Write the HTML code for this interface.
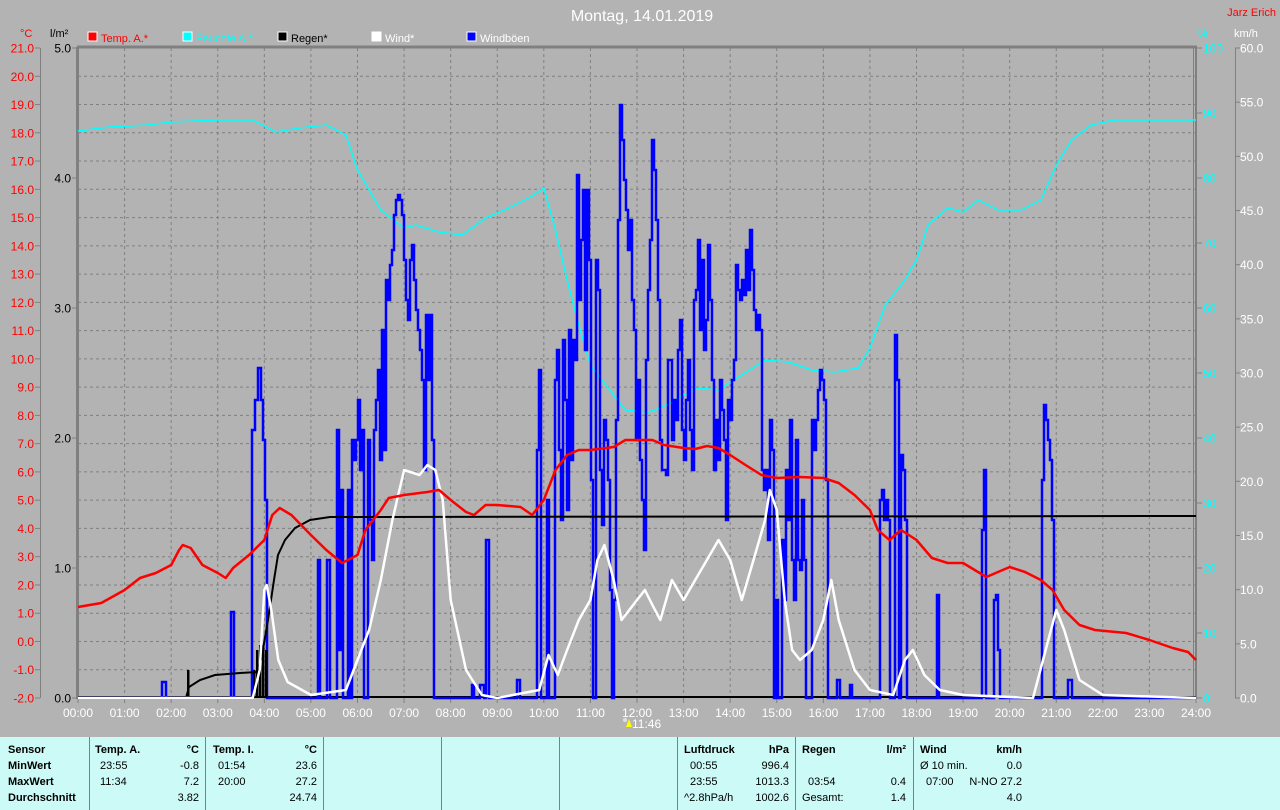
<!DOCTYPE html>
<html><head><meta charset="utf-8"><style>
body{margin:0;width:1280px;height:810px;background:#b3b3b3;overflow:hidden;font-family:"Liberation Sans",sans-serif}
svg{position:absolute;left:0;top:0}
#tbl{position:absolute;left:0;top:737px;width:1280px;height:73px;background:#ccfaf6;font-size:11px;color:#000}
#tbl div{position:absolute;white-space:nowrap}
.b{font-weight:bold}
.sep{top:0;width:1px;height:73px;background:#808080}
.r{text-align:right}
</style></head><body>
<svg id="s" width="1280" height="737" xmlns="http://www.w3.org/2000/svg" font-family="Liberation Sans, sans-serif"></svg>
<div id="tbl">
<div class="sep" style="left:89px"></div><div class="sep" style="left:205px"></div><div class="sep" style="left:323px"></div><div class="sep" style="left:441px"></div><div class="sep" style="left:559px"></div><div class="sep" style="left:677px"></div><div class="sep" style="left:795px"></div><div class="sep" style="left:913px"></div>
<div class="b" style="left:8px;top:7px">Sensor</div><div class="b" style="left:8px;top:23px">MinWert</div><div class="b" style="left:8px;top:39px">MaxWert</div><div class="b" style="left:8px;top:55px">Durchschnitt</div>
<div class="b" style="left:95px;top:7px">Temp. A.</div><div class="b r" style="right:1081px;top:7px">°C</div>
<div style="left:100px;top:23px">23:55</div><div class="r" style="right:1081px;top:23px">-0.8</div>
<div style="left:100px;top:39px">11:34</div><div class="r" style="right:1081px;top:39px">7.2</div>
<div class="r" style="right:1081px;top:55px">3.82</div>
<div class="b" style="left:213px;top:7px">Temp. I.</div><div class="b r" style="right:963px;top:7px">°C</div>
<div style="left:218px;top:23px">01:54</div><div class="r" style="right:963px;top:23px">23.6</div>
<div style="left:218px;top:39px">20:00</div><div class="r" style="right:963px;top:39px">27.2</div>
<div class="r" style="right:963px;top:55px">24.74</div>
<div class="b" style="left:684px;top:7px">Luftdruck</div><div class="b r" style="right:491px;top:7px">hPa</div>
<div style="left:690px;top:23px">00:55</div><div class="r" style="right:491px;top:23px">996.4</div>
<div style="left:690px;top:39px">23:55</div><div class="r" style="right:491px;top:39px">1013.3</div>
<div style="left:684px;top:55px">^2.8hPa/h</div><div class="r" style="right:491px;top:55px">1002.6</div>
<div class="b" style="left:802px;top:7px">Regen</div><div class="b r" style="right:374px;top:7px">l/m²</div>
<div style="left:808px;top:39px">03:54</div><div class="r" style="right:374px;top:39px">0.4</div>
<div style="left:802px;top:55px">Gesamt:</div><div class="r" style="right:374px;top:55px">1.4</div>
<div class="b" style="left:920px;top:7px">Wind</div><div class="b r" style="right:258px;top:7px">km/h</div>
<div style="left:920px;top:23px">Ø 10 min.</div><div class="r" style="right:258px;top:23px">0.0</div>
<div style="left:926px;top:39px">07:00</div><div class="r" style="right:258px;top:39px">N-NO 27.2</div>
<div class="r" style="right:258px;top:55px">4.0</div>
</div>
<script>
var s=document.getElementById('s'),o='';
var X0=78,X1=1196,Y0=48,Y1=698,HW=(X1-X0)/24;
function hx(h){return X0+h*HW}
for(var i=1;i<24;i++){var x=hx(i);o+='<line x1="'+x+'" y1="'+Y0+'" x2="'+x+'" y2="'+Y1+'" stroke="#808080" stroke-dasharray="3,3"/>';}
for(var i=1;i<23;i++){var y=Y0+i*650/23;o+='<line x1="'+X0+'" y1="'+y+'" x2="'+X1+'" y2="'+y+'" stroke="#808080" stroke-dasharray="3,3"/>';}
o+='<line x1="77" y1="47" x2="1197" y2="47" stroke="#808080" stroke-width="3"/>';
o+='<line x1="77.5" y1="47" x2="77.5" y2="699" stroke="#808080" stroke-width="3"/>';
o+='<line x1="1193.5" y1="47" x2="1193.5" y2="699" stroke="#808080" stroke-width="1"/>';
o+='<line x1="1196" y1="47" x2="1196" y2="699" stroke="#808080" stroke-width="2"/>';
o+='<line x1="78" y1="697" x2="1196" y2="697" stroke="#000" stroke-width="2"/>';
o+='<line x1="40.5" y1="48" x2="40.5" y2="698" stroke="#808080"/>';
for(var i=0;i<=23;i++){var y=Y0+i*650/23,v=(21-i).toFixed(1);o+='<line x1="35" y1="'+y+'" x2="40" y2="'+y+'" stroke="#808080"/><text x="34" y="'+(y+4.5)+'" fill="#f00" font-size="12" text-anchor="end">'+v+'</text>';}
for(var i=0;i<=5;i++){var y=Y0+i*130;o+='<line x1="72" y1="'+y+'" x2="77" y2="'+y+'" stroke="#808080"/><text x="71" y="'+(y+4.5)+'" fill="#000" font-size="12" text-anchor="end">'+(5-i).toFixed(1)+'</text>';}
for(var i=0;i<=10;i++){var y=Y0+i*65;o+='<line x1="1197" y1="'+y+'" x2="1202" y2="'+y+'" stroke="#808080"/><text x="1203" y="'+(y+4.5)+'" fill="#0ff" font-size="12">'+(100-i*10)+'</text>';}
o+='<line x1="1235.5" y1="48" x2="1235.5" y2="698" stroke="#808080"/>';
for(var i=0;i<=12;i++){var y=Y0+i*650/12;o+='<line x1="1235" y1="'+y+'" x2="1240" y2="'+y+'" stroke="#808080"/><text x="1240" y="'+(y+4.5)+'" fill="#fff" font-size="12">'+(60-i*5).toFixed(1)+'</text>';}
for(var i=0;i<=24;i++){var x=hx(i);o+='<line x1="'+x+'" y1="698" x2="'+x+'" y2="703" stroke="#808080"/><text x="'+x+'" y="717" fill="#fff" font-size="12" text-anchor="middle">'+(i<10?'0':'')+i+':00</text>';}
o+='<text x="632" y="728" fill="#fff" font-size="12">11:46</text><path d="M626 727 l3 -8 l3 8z" fill="#ff0"/><circle cx="625" cy="720" r="2" fill="#dde"/>';
o+='<text x="642" y="21" fill="#fff" font-size="16" text-anchor="middle">Montag, 14.01.2019</text>';
o+='<text x="1276" y="16" fill="#f00" font-size="11" text-anchor="end">Jarz Erich</text>';
o+='<text x="20" y="37" fill="#f00" font-size="11">°C</text><text x="50" y="37" fill="#000" font-size="11">l/m²</text>';
o+='<text x="1198" y="37" fill="#0ff" font-size="11">%</text><text x="1234" y="37" fill="#fff" font-size="11">km/h</text>';
var lg=[[88,'#f00','Temp. A.*','#f00'],[183,'#0ff','Feuchte A.*','#0ff'],[278,'#000','Regen*','#000'],[372,'#fff','Wind*','#fff'],[467,'#00f','Windböen','#fff']];
lg.forEach(function(l){o+='<rect x="'+l[0]+'" y="32" width="9" height="9" fill="'+l[1]+'" stroke="#fff"/><text x="'+(l[0]+13)+'" y="42" fill="'+l[3]+'" font-size="11">'+l[2]+'</text>';});
function poly(a,c,w){var p=a.map(function(q){return hx(q[0]).toFixed(1)+','+q[1]}).join(' ');return '<polyline points="'+p+'" fill="none" stroke="'+c+'" stroke-width="'+w+'" stroke-linejoin="round"/>';}
var cy=[[0,131],[0.67,127],[1.5,125],[2,122],[3,120],[3.75,120],[4.25,132],[4.75,128],[5.33,125],[5.75,135],[6,170],[6.5,210],[7,228],[7.25,225],[7.75,232],[8.25,235],[8.75,218],[9.25,208],[9.75,196],[10,188],[10.25,230],[10.5,280],[10.75,325],[11,365],[11.33,385],[11.75,410],[12.25,412],[12.5,408],[13,395],[13.33,388],[13.75,390],[14.25,375],[14.75,360],[15.25,362],[15.75,370],[16.25,372],[16.75,368],[17,348],[17.33,305],[17.75,280],[18,260],[18.25,225],[18.67,208],[19,212],[19.33,200],[19.75,210],[20.25,210],[20.67,200],[21,165],[21.33,140],[21.75,125],[22.25,120],[24,120]];
o+=poly(cy,'#0ff',1.5);
var g=[[78,698],[160,698],[162,682],[166,698],[229,698],[231,612],[234,698],[250,698],[252,430],[255,400],[258,368],[261,400],[263,440],[265,500],[267,698],[316,698],[318,560],[320,698],[325,698],[327,560],[330,698],[335,698],[337,430],[339,650],[341,490],[343,698],[346,698],[348,490],[350,698],[352,440],[354,460],[356,440],[358,400],[360,470],[362,430],[364,698],[366,698],[368,440],[370,520],[372,560],[374,430],[376,400],[378,370],[380,460],[382,330],[384,450],[386,280],[388,300],[390,265],[392,250],[394,215],[396,200],[398,195],[400,200],[402,215],[404,260],[406,300],[408,320],[410,260],[412,245],[414,280],[416,310],[418,330],[420,350],[422,380],[424,470],[426,315],[428,380],[430,315],[432,440],[434,698],[470,698],[472,685],[474,698],[478,698],[480,685],[484,698],[486,540],[489,698],[515,698],[517,680],[520,698],[535,698],[537,450],[539,370],[541,698],[545,698],[547,500],[549,698],[553,698],[555,380],[557,350],[559,450],[561,520],[563,340],[565,400],[567,510],[569,330],[571,460],[573,340],[575,360],[577,175],[579,300],[581,240],[583,190],[585,350],[587,190],[589,260],[591,480],[593,698],[596,260],[598,290],[600,470],[602,525],[604,420],[606,440],[608,480],[610,590],[612,698],[614,600],[616,420],[618,220],[620,105],[622,140],[624,180],[626,210],[628,250],[630,220],[632,300],[634,330],[636,440],[638,380],[640,460],[642,500],[644,550],[646,360],[648,290],[650,240],[652,140],[654,170],[656,220],[658,300],[660,440],[662,470],[664,470],[666,475],[668,360],[670,360],[672,440],[674,400],[676,420],[678,350],[680,320],[682,430],[684,460],[686,400],[688,360],[690,430],[692,470],[694,300],[696,290],[698,240],[700,330],[702,260],[704,350],[706,320],[708,245],[710,300],[712,380],[714,470],[716,420],[718,460],[720,380],[722,410],[724,440],[726,520],[728,400],[730,420],[732,380],[734,360],[736,265],[738,290],[740,300],[742,280],[744,295],[746,250],[748,290],[750,230],[752,270],[754,310],[756,330],[758,315],[760,330],[762,470],[764,490],[766,470],[768,540],[770,420],[772,450],[774,698],[776,600],[778,698],[782,540],[784,600],[786,470],[788,520],[790,420],[792,560],[794,600],[796,440],[798,560],[800,570],[802,500],[804,560],[806,698],[810,698],[812,420],[814,450],[816,420],[818,390],[820,370],[822,380],[824,400],[826,480],[828,698],[835,698],[837,680],[840,698],[848,698],[850,685],[852,698],[878,698],[880,500],[882,490],[884,520],[886,500],[888,520],[890,698],[893,698],[895,335],[897,380],[899,698],[901,455],[903,470],[905,520],[907,698],[935,698],[937,595],[939,698],[980,698],[982,530],[984,470],[986,698],[992,698],[994,600],[996,595],[998,650],[1000,698],[1040,698],[1042,480],[1044,405],[1046,420],[1048,440],[1050,460],[1052,520],[1054,698],[1066,698],[1068,680],[1072,698],[1196,698]];
var d='M'+g[0][0]+' '+g[0][1];for(var i=1;i<g.length;i++){d+=' H'+g[i][0]+' V'+g[i][1];}
o+='<path d="'+d+'" fill="none" stroke="#00f" stroke-width="2.5"/>';
[[188,670],[254,670],[257,650],[260,645],[263,645],[266,650]].forEach(function(b){o+='<rect x="'+(b[0]-1)+'" y="'+b[1]+'" width="2.5" height="'+(698-b[1])+'" fill="#000"/>';});
var bl='78,698 186,698 189,687 200,680 215,675 240,673 258,672 262,655 268,620 274,580 278,555 285,540 295,528 310,520 330,517 1196,516';
o+='<polyline points="'+bl+'" fill="none" stroke="#000" stroke-width="2"/>';
var w=[[0,698],[3.75,698],[3.9,670],[4,590],[4.05,585],[4.15,610],[4.3,660],[4.5,682],[5,695],[5.75,690],[6,660],[6.25,630],[6.5,580],[6.75,520],[7,470],[7.33,475],[7.5,465],[7.67,470],[7.83,500],[8,600],[8.33,670],[8.67,695],[9,698],[9.9,690],[10.1,655],[10.3,675],[10.5,650],[10.75,620],[11,600],[11.15,560],[11.3,545],[11.5,580],[11.67,620],[12,600],[12.17,590],[12.33,605],[12.5,620],[12.75,580],[13,600],[13.25,580],[13.5,560],[13.75,540],[14,560],[14.25,600],[14.5,560],[14.75,520],[14.85,490],[15,510],[15.17,600],[15.33,650],[15.5,660],[15.75,650],[16,620],[16.17,580],[16.33,620],[16.67,670],[17,690],[17.5,695],[17.75,660],[17.92,650],[18.17,675],[18.5,690],[19,695],[20.5,698],[20.83,640],[21,610],[21.17,630],[21.5,680],[22,695],[24,698]];
o+=poly(w,'#fff',2.5);
var r=[[0,607],[0.5,603],[1,590],[1.33,578],[1.67,573],[2,565],[2.17,550],[2.25,545],[2.42,548],[2.67,565],[3,573],[3.17,578],[3.33,568],[3.67,555],[4,540],[4.17,515],[4.33,508],[4.58,515],[5,535],[5.33,550],[5.67,563],[6,555],[6.17,530],[6.5,510],[6.67,498],[7,495],[7.5,492],[7.75,490],[8,500],[8.33,512],[8.5,515],[8.75,505],[9,505],[9.5,507],[9.75,515],[10,500],[10.25,470],[10.5,455],[10.75,450],[11,450],[11.5,447],[11.75,440],[12,440],[12.33,440],[12.58,445],[13,448],[13.25,449],[13.5,446],[13.75,448],[14,455],[14.33,465],[14.67,475],[15,478],[15.5,477],[16,478],[16.33,483],[16.67,495],[17,510],[17.17,530],[17.42,540],[17.67,530],[18,540],[18.33,558],[18.67,563],[19,563],[19.25,570],[19.5,577],[19.75,572],[20,567],[20.33,572],[20.67,580],[20.92,590],[21.17,610],[21.5,625],[21.83,630],[22.5,633],[23,640],[23.5,648],[23.83,652],[24,660]];
o+=poly(r,'#f00',2.5);
s.innerHTML=o;
</script>
</body></html>
